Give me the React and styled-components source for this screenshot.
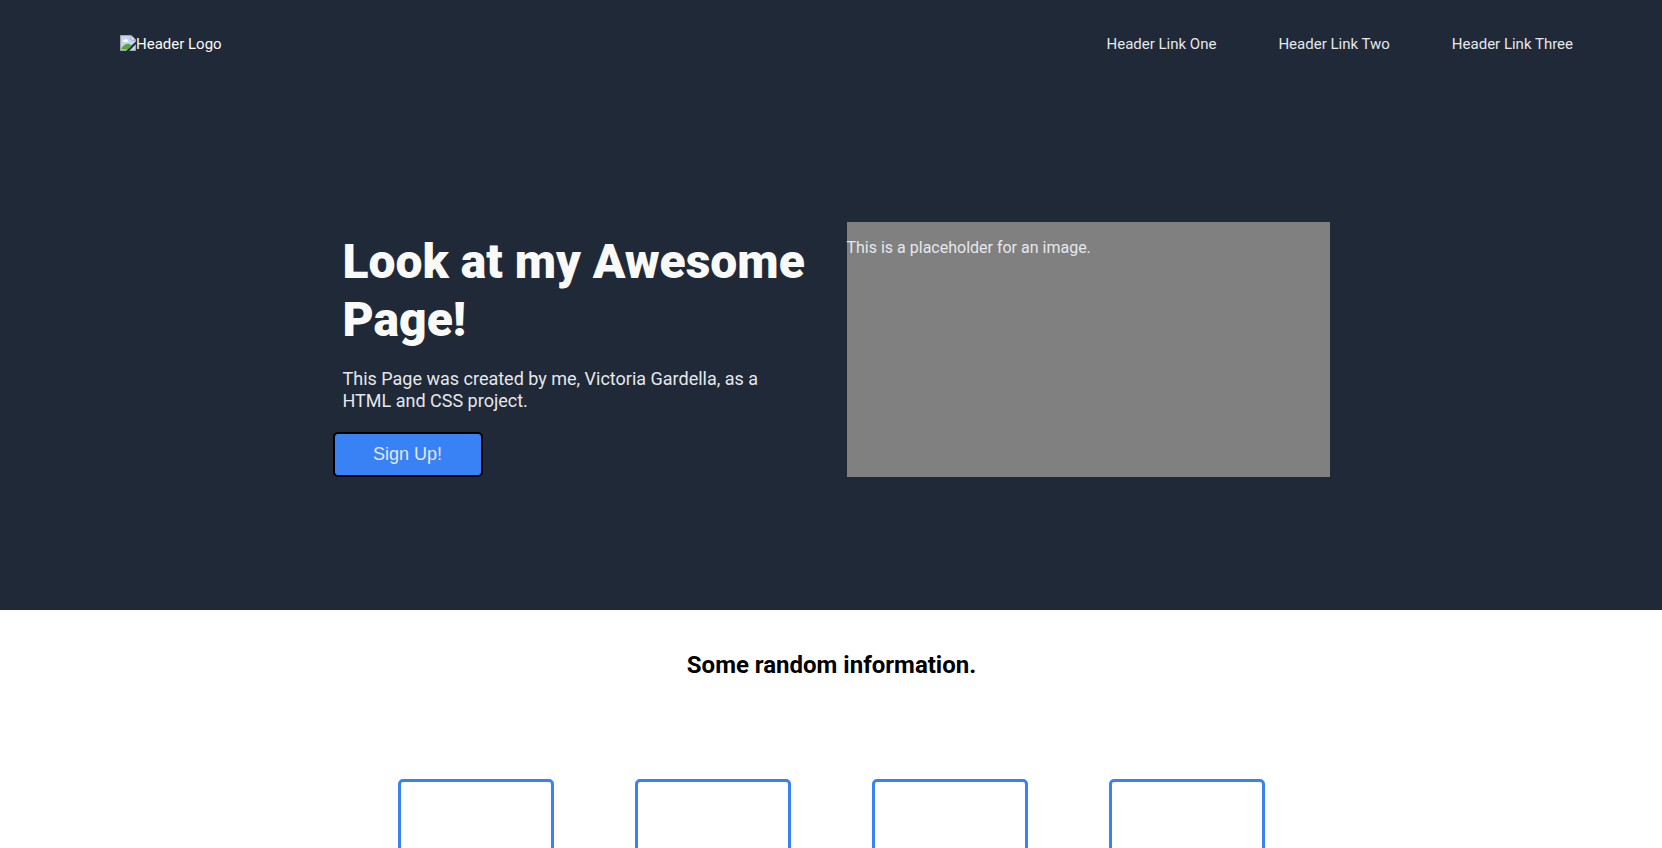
import React from "react";
import styled, { createGlobalStyle } from "styled-components";

const GlobalStyle = createGlobalStyle`
  *, *::before, *::after { box-sizing: border-box; }
  body {
    margin: 0;
    background: #ffffff;
    color: #000000;
    font-family: Roboto, "Liberation Sans", sans-serif;
    font-size: 16px;
  }
`;

const Banner = styled.div`
  background: #1f2937;
  color: #e5e7eb;
  padding-bottom: 133px;
`;

const Header = styled.header`
  display: flex;
  justify-content: space-between;
  align-items: center;
  padding: 34px 89px 0 120px;
  font-size: 15px;
  line-height: 20px;
`;

const Logo = styled.a`
  display: flex;
  align-items: center;
  color: #f9faf8;
  text-decoration: none;
`;

const Nav = styled.nav`
  display: flex;
  gap: 62px;
`;

const NavLink = styled.a`
  color: #e5e7eb;
  text-decoration: none;
`;

const Hero = styled.main`
  display: grid;
  grid-template-columns: 1fr 1fr;
  gap: 31px;
  max-width: 997px;
  margin: 168px auto 0;
`;

const Pitch = styled.div`
  display: flex;
  flex-direction: column;
  align-items: flex-start;
  padding-top: 11px;
`;

const Title = styled.h1`
  margin: 0;
  padding: 0 10px;
  color: #f9faf8;
  font-size: 48px;
  font-weight: 900;
  line-height: 58px;
`;

const Lead = styled.p`
  margin: 19px 0 0;
  padding: 0 10px;
  font-size: 18px;
  line-height: 22px;
`;

const SignUp = styled.button`
  width: 150px;
  height: 45px;
  margin-top: 20px;
  padding: 0;
  border: 2px solid #000000;
  border-radius: 5px;
  background: #3882f6;
  color: #e5e7eb;
  font-family: "Liberation Sans", Arial, sans-serif;
  font-size: 18px;
`;

const Placeholder = styled.div`
  height: 255px;
  padding-top: 16px;
  background: #808080;
  line-height: 19px;
`;

const Information = styled.section`
  display: flex;
  flex-direction: column;
  align-items: center;
  gap: 100px;
  padding: 41px 24px 41px 25px;
`;

const SectionTitle = styled.h2`
  margin: 0;
  font-size: 24px;
  font-weight: 700;
  line-height: 28px;
`;

const Cards = styled.div`
  display: flex;
  justify-content: center;
  gap: 81px;
`;

const Card = styled.div`
  width: 156px;
  height: 156px;
  border: 3px solid #3882f6;
  border-radius: 5px;
`;

function MissingImageIcon() {
  return (
    <svg width="16" height="18" viewBox="0 0 16 18" aria-hidden="true">
      <path d="M0.5 0.5H11L15.5 5V15.5H0.5Z" fill="#c3d3f4" stroke="#a5a5a5" />
      <path d="M11 0.5V5H15.5Z" fill="#ffffff" stroke="#a5a5a5" />
      <path d="M3 6.5a1.3 1.3 0 0 1 1.3-1.6 1.8 1.8 0 0 1 3.3 0.3A1.1 1.1 0 0 1 8 7H3.4Z" fill="#ffffff" />
      <path d="M1.5 14.5V13C4 9.8 6.5 8.4 9 9L12 10.5 8 14.5Z" fill="#54a93a" />
      <path d="M16 6.5V9L9 16H6L10.5 12 12.5 9.5Z" fill="#1f2937" />
    </svg>
  );
}

const links = ["Header Link One", "Header Link Two", "Header Link Three"];
const cards = [1, 2, 3, 4];

export default function App() {
  return (
    <>
      <GlobalStyle />
      <Banner>
        <Header>
          <Logo href="#">
            <MissingImageIcon />
            Header Logo
          </Logo>
          <Nav>
            {links.map((label) => (
              <NavLink key={label} href="#">{label}</NavLink>
            ))}
          </Nav>
        </Header>
        <Hero>
          <Pitch>
            <Title>Look at my Awesome Page!</Title>
            <Lead>
              This Page was created by me, Victoria Gardella, as a HTML and CSS project.
            </Lead>
            <SignUp type="button">Sign Up!</SignUp>
          </Pitch>
          <Placeholder>This is a placeholder for an image.</Placeholder>
        </Hero>
      </Banner>
      <Information>
        <SectionTitle>Some random information.</SectionTitle>
        <Cards>
          {cards.map((id) => (
            <Card key={id} />
          ))}
        </Cards>
      </Information>
    </>
  );
}
